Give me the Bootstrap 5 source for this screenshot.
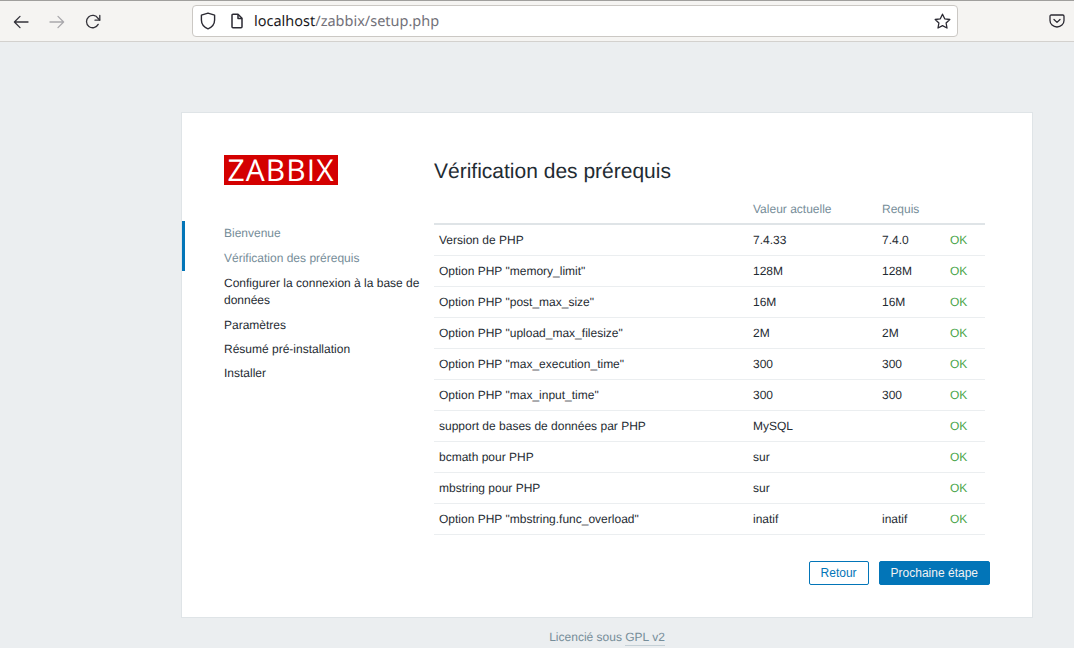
<!DOCTYPE html>
<html lang="fr">
<head>
<meta charset="utf-8">
<title>Zabbix setup</title>
<link rel="stylesheet" href="https://cdn.jsdelivr.net/npm/bootstrap@5.3.0/dist/css/bootstrap.min.css">
<style>
html,body{height:648px;overflow:hidden}
body{background:#ebeef0;font-family:"Liberation Sans",Arial,sans-serif;font-size:12px;line-height:14px;color:#1f2c33;text-rendering:geometricPrecision}
.browser-bar{height:42px;background:#f5f4f2;border-top:1px solid #a09f9d;border-bottom:1px solid #d3d1ce;padding:4px 0 0 0}
.nav-btn{width:36px;height:34px;flex:none}
.nav-strip{padding-left:3px;width:192px;flex:none}
.url-box{width:766px;height:32px;flex:none;background:#fff;border:1px solid #cbc8c4;border-radius:4px;padding:0 6px 0 7px}
.url-text{font-family:"Noto Sans","Open Sans",sans-serif;font-size:14.5px;color:#1c1b22;margin-left:10px;line-height:30px;white-space:nowrap}
.url-text span{color:#73727a}
.pocket-slot{width:116px;height:32px;padding-right:9px}
.file-icon{margin-left:14px}
.setup-panel{width:852px;height:506px;margin:70px 0 0 181px;background:#fff;border:1px solid #dfe4e7;padding:42px 42px 0 0}
.side-col{width:252px;flex:none}
.logo-box{display:block;margin-left:42px;width:114px;height:30px;background:#d40000;color:#fff;font-family:"Open Sans","Liberation Sans",sans-serif;font-size:30px;line-height:30px;text-align:center;letter-spacing:1.1px}
.step-list{margin:36px 0 0;padding:0;list-style:none}
.step-list li{padding:4px 14px 5px 39px;border-left:3px solid transparent;line-height:16px;color:#1f2c33}
.step-list li.step-wrap{line-height:17px;padding-bottom:4px}
.step-list li.step-tight{padding-bottom:4px}
.step-done{color:#768d99!important;border-left-color:#0275b8!important}
.main-col{width:556px;flex:none}
.page-title{font-family:"Liberation Sans",Arial,sans-serif;font-size:21px;line-height:24px;font-weight:400;color:#1f2c33;margin:5px 0 9px}
.req-table{width:551px;margin:0;table-layout:fixed;font-size:12px;line-height:14px;color:#1f2c33}
.req-table>*>tr>*{padding:8px 5px;border-bottom:1px solid #ebeef0;background:transparent;color:inherit;font-weight:400}
.req-table>thead>tr>th{color:#768d99;border-bottom:2px solid #dfe4e7;padding:9px 5px 7px}
.req-table>tbody{border-top:0!important}
.col-a{width:314px}.col-b{width:129px}.col-c{width:68px}.col-d{width:40px}
.req-table>tbody>tr>td{height:31px;color:#1f2c33}
.req-table>tbody>tr>td.ok-cell{color:#4aa54a}
.action-row{margin-top:26px;gap:10px}
.btn-ghost,.btn-solid{font-size:12px;line-height:14px;height:24px;padding:4px 11px;border-radius:2px;border:1px solid #0275b8}
.btn-ghost{background:#fff;color:#0275b8}
.btn-solid{background:#0275b8;color:#f2f2f2}
.footer-line{text-align:center;color:#768d99;margin:12px 0 0 140px;width:934px;line-height:14px}
.footer-line a{color:#768d99;text-decoration:none;padding-bottom:1px;border-bottom:1px solid #c5d0d6}
</style>
</head>
<body>
<div class="browser-bar d-flex align-items-start">
  <div class="nav-strip d-flex">
    <div class="nav-btn d-flex align-items-center justify-content-center">
      <svg width="16" height="16" viewBox="0 0 16 16" fill="none" stroke="#33323a" stroke-width="1.3" stroke-linecap="round" stroke-linejoin="round"><path d="M15 8H1.500M7 2.400 1.400 8 7 13.600"/></svg>
    </div>
    <div class="nav-btn d-flex align-items-center justify-content-center">
      <svg width="16" height="16" viewBox="0 0 16 16" fill="none" stroke="#a9a8ac" stroke-width="1.3" stroke-linecap="round" stroke-linejoin="round"><path d="M1 8h13.500M9 2.400 14.600 8 9 13.600"/></svg>
    </div>
    <div class="nav-btn d-flex align-items-center justify-content-center">
      <svg width="16" height="16" viewBox="0 0 16 16" fill="none" stroke="#33323a" stroke-width="1.3" stroke-linecap="round" stroke-linejoin="round"><path d="M13.200 10.400A6.200 6.200 0 1 1 13 4.300L14.600 6"/><path d="M14.800 1.400v4.800H10"/></svg>
    </div>
  </div>
  <div class="url-box d-flex align-items-center">
    <svg width="16" height="18" viewBox="0 0 16 18" fill="none" stroke="#2b2a33" stroke-width="1.4" stroke-linejoin="round"><path d="M8 1.200 14.600 3.200V8c0 4.200-2.800 7.200-6.600 8.800C4.200 15.200 1.400 12.200 1.400 8V3.200Z"/></svg>
    <svg class="file-icon" width="14" height="16" viewBox="0 0 14 16" fill="none" stroke="#2b2a33" stroke-width="1.5" stroke-linejoin="round"><path d="M2 2.200c0-.6.4-1 1-1h5l4 4v8.600c0 .6-.4 1-1 1H3c-.6 0-1-.4-1-1Z"/><path d="M8 1.400V5.400h4"/></svg>
    <div class="url-text">localhost<span>/zabbix/setup.php</span></div>
    <svg class="ms-auto" width="17" height="17" viewBox="0 0 17 17" fill="none" stroke="#2b2a33" stroke-width="1.3" stroke-linejoin="round"><path d="M8.500 1.200 10.700 5.800 15.800 6.500 12.100 10 13 15 8.500 12.600 4 15 4.900 10 1.200 6.500 6.300 5.800Z"/></svg>
  </div>
  <div class="pocket-slot d-flex justify-content-end align-items-center">
    <svg width="16" height="14" viewBox="0 0 16 14" fill="none" stroke="#2b2a33" stroke-width="1.3" stroke-linecap="round" stroke-linejoin="round"><path d="M2.200 1h11.600c.7 0 1.200.5 1.200 1.200V6.500c0 3.600-3.100 6.500-7 6.500s-7-2.900-7-6.500V2.200C1 1.500 1.500 1 2.200 1Z"/><path d="M5 5.500 8 8.400l3-2.900"/></svg>
  </div>
</div>

<div class="setup-panel d-flex">
  <div class="side-col">
    <span class="logo-box">ZABBIX</span>
    <ul class="step-list">
      <li class="step-done">Bienvenue</li>
      <li class="step-done">Vérification des prérequis</li>
      <li class="step-wrap">Configurer la connexion à la base de données</li>
      <li class="step-tight">Paramètres</li>
      <li class="step-tight">Résumé pré-installation</li>
      <li>Installer</li>
    </ul>
  </div>
  <div class="main-col">
    <h1 class="page-title">Vérification des prérequis</h1>
    <table class="table req-table">
      <colgroup><col class="col-a"><col class="col-b"><col class="col-c"><col class="col-d"></colgroup>
      <thead><tr><th></th><th>Valeur actuelle</th><th>Requis</th><th></th></tr></thead>
      <tbody>
        <tr><td>Version de PHP</td><td>7.4.33</td><td>7.4.0</td><td class="ok-cell">OK</td></tr>
        <tr><td>Option PHP "memory_limit"</td><td>128M</td><td>128M</td><td class="ok-cell">OK</td></tr>
        <tr><td>Option PHP "post_max_size"</td><td>16M</td><td>16M</td><td class="ok-cell">OK</td></tr>
        <tr><td>Option PHP "upload_max_filesize"</td><td>2M</td><td>2M</td><td class="ok-cell">OK</td></tr>
        <tr><td>Option PHP "max_execution_time"</td><td>300</td><td>300</td><td class="ok-cell">OK</td></tr>
        <tr><td>Option PHP "max_input_time"</td><td>300</td><td>300</td><td class="ok-cell">OK</td></tr>
        <tr><td>support de bases de données par PHP</td><td>MySQL</td><td></td><td class="ok-cell">OK</td></tr>
        <tr><td>bcmath pour PHP</td><td>sur</td><td></td><td class="ok-cell">OK</td></tr>
        <tr><td>mbstring pour PHP</td><td>sur</td><td></td><td class="ok-cell">OK</td></tr>
        <tr><td>Option PHP "mbstring.func_overload"</td><td>inatif</td><td>inatif</td><td class="ok-cell">OK</td></tr>
      </tbody>
    </table>
    <div class="d-flex justify-content-end action-row">
      <button type="button" class="btn-ghost">Retour</button>
      <button type="button" class="btn-solid">Prochaine étape</button>
    </div>
  </div>
</div>
<div class="footer-line">Licencié sous <a href="#">GPL v2</a></div>
</body>
</html>
